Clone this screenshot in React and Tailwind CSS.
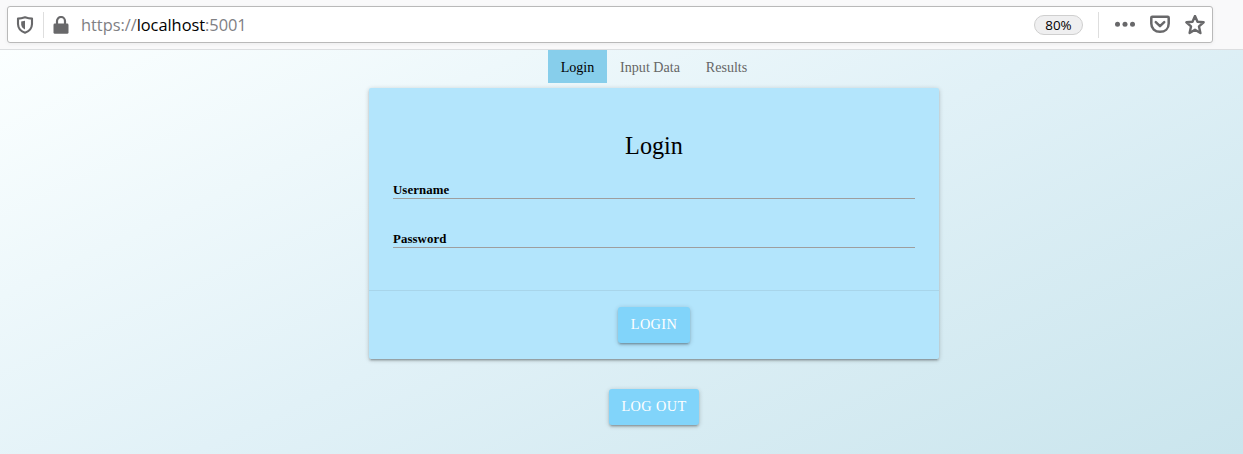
import React from "react";

function Shield() {
  return (
    <svg className="h-[18px] w-[18px]" viewBox="0 0 18 18" fill="none">
      <path d="M9 1.2 C6.5 2 4 2.5 2 2.6 V8 C2.1 12.3 5 15.3 9 16.7 C13 15.3 15.9 12.3 16 8 V2.6 C14 2.5 11.5 2 9 1.2Z" stroke="#68686a" strokeWidth="2.1" strokeLinejoin="round" />
      <path d="M9 4.7 L5.2 5.4 V8.3 C5.3 10.9 6.7 12.5 9 13.4Z" fill="#68686a" />
    </svg>
  );
}

function Lock() {
  return (
    <svg className="h-[18px] w-4" viewBox="0 0 16 18" fill="none">
      <path d="M4 8 V5 a4 4 0 0 1 8 0 V8" stroke="#68686a" strokeWidth="2.2" />
      <rect x="0.5" y="7.5" width="15" height="10.3" rx="1.4" fill="#68686a" />
    </svg>
  );
}

function Dots() {
  return (
    <svg className="h-5 w-5" viewBox="0 0 20 20" fill="#68686a">
      <circle cx="2.5" cy="9.3" r="2.5" />
      <circle cx="10" cy="9.3" r="2.5" />
      <circle cx="17.5" cy="9.3" r="2.5" />
    </svg>
  );
}

function Pocket() {
  return (
    <svg className="h-5 w-5" viewBox="0 0 20 20" fill="none" stroke="#68686a" strokeWidth="2.5" strokeLinecap="round" strokeLinejoin="round">
      <path d="M2.2 1.8 H17.8 Q18.7 1.8 18.7 2.8 V8.4 C18.7 13.6 15 16.8 10 16.8 C5 16.8 1.3 13.6 1.3 8.4 V2.8 Q1.3 1.8 2.2 1.8Z" />
      <path d="M5.8 7.2 L10 11.2 L14.2 7.2" />
    </svg>
  );
}

function Star() {
  return (
    <svg className="h-5 w-5" viewBox="0 0 20 20" fill="none" stroke="#68686a" strokeWidth="2.4" strokeLinejoin="round">
      <path d="M10 1 L12.5 6.7 L18.6 7.3 L14 11.4 L15.4 18 L10 14.8 L4.6 18 L6 11.4 L1.4 7.3 L7.5 6.7Z" />
    </svg>
  );
}

function AddressBar() {
  return (
    <header className="h-[50px] border-b border-[#dcdee0] bg-[#f9f9fa] pt-[6px] pl-[7px]">
      <div className="flex h-[37px] w-[1206px] items-center rounded-[3px] border border-[#b9b9b9] bg-white pl-2 shadow-[0_1px_4px_rgba(0,0,0,0.06)]">
        <Shield />
        <div className="ml-[9px] h-[26px] w-px bg-[#dedede]" />
        <div className="ml-[9px]"><Lock /></div>
        <div className="ml-3 w-[200px] pt-[2px] font-['Open_Sans','Noto_Sans',sans-serif] text-[16.4px] tracking-[-0.03px] text-[#808084]">
          https://<span className="text-black">localhost</span>:5001
        </div>
        <div className="ml-auto flex h-5 w-[49px] items-center justify-center rounded-full border border-[#cfcfcf] bg-[#efeff0] pt-[2px] font-['Open_Sans','Noto_Sans',sans-serif] text-[13.4px] text-black">80%</div>
        <div className="ml-[15px] h-[26px] w-px bg-[#dedede]" />
        <div className="mr-[7px] ml-4 flex gap-[15px]">
          <Dots />
          <Pocket />
          <Star />
        </div>
      </div>
    </header>
  );
}

function Field({ label }) {
  return (
    <label className="block h-[49px]">
      <span className="block h-[18px] border-b border-[#9e9e9e] text-[12.8px] leading-[18px] font-bold tracking-[0.1px]">{label}</span>
    </label>
  );
}

function Button({ children, className }) {
  return (
    <button className={`h-9 rounded-[3px] bg-[#81d4fa] text-center text-[14.3px] tracking-[0.4px] text-white shadow-[0_2px_2px_0_rgba(0,0,0,0.14),0_3px_1px_-2px_rgba(0,0,0,0.12),0_1px_5px_0_rgba(0,0,0,0.2)] ${className}`}>
      {children}
    </button>
  );
}

export default function App() {
  return (
    <div className="flex h-[454px] flex-col overflow-hidden font-['Liberation_Serif',serif] text-black">
      <AddressBar />
      <main className="flex-1 bg-[linear-gradient(155deg,#fbffff,#e1f1f7_50%,#cae5ed)]">
        <nav className="ml-[548px] flex h-[33px] text-[14.1px] leading-[35px] text-[#666]">
          <a className="w-[59px] bg-[#87ceeb] text-center text-black">Login</a>
          <a className="w-[86px] text-center">Input Data</a>
          <a className="w-[67px] text-center">Results</a>
        </nav>
        <section className="mt-[5px] ml-[369px] h-[271px] w-[570px] rounded-[2px] bg-[#b3e5fc] shadow-[0_2px_2px_0_rgba(0,0,0,0.14),0_3px_1px_-2px_rgba(0,0,0,0.12),0_1px_5px_0_rgba(0,0,0,0.2)]">
          <div className="h-[202px] px-6 pt-[42px]">
            <h1 className="h-[51px] text-center text-[24.2px] leading-[31px]">Login</h1>
            <Field label="Username" />
            <Field label="Password" />
          </div>
          <div className="flex h-[69px] justify-center border-t border-[#a8d5ea] pt-4">
            <Button className="w-[72px]">LOGIN</Button>
          </div>
        </section>
        <div className="mt-[30px] ml-[369px] flex w-[570px] justify-center">
          <Button className="w-[90px]">LOG OUT</Button>
        </div>
      </main>
    </div>
  );
}
